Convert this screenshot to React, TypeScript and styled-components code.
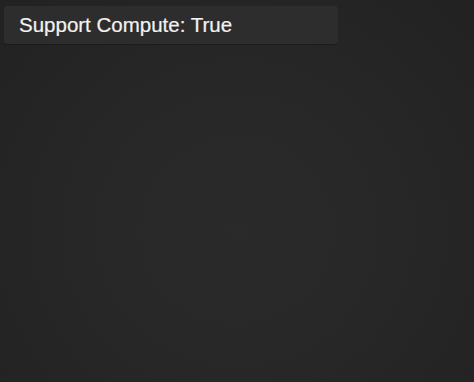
import React from 'react'
import styled, { createGlobalStyle } from 'styled-components'

const GlobalStyle = createGlobalStyle`
  html, body {
    margin: 0;
    padding: 0;
    height: 100%;
  }
  body {
    font-family: "Liberation Sans", Arial, sans-serif;
    background: #232323;
  }
  #root {
    height: 100%;
  }
`

const Page = styled.div`
  box-sizing: border-box;
  height: 100%;
  padding: 6px 4px;
  background: radial-gradient(ellipse at 50% 60%, #2a2a2a 0%, #272727 45%, #222222 100%);
`

const StatusBar = styled.div`
  box-sizing: border-box;
  width: 334px;
  height: 38px;
  padding: 0 15px;
  display: flex;
  align-items: center;
  background: #2d2d2d;
  border-radius: 3px;
  box-shadow: 0 1px 1px rgba(0, 0, 0, 0.25);
  color: #f2f2f2;
  font-size: 20.5px;
  -webkit-text-stroke: 0.2px #f2f2f2;
`

export default function App() {
  return (
    <>
      <GlobalStyle />
      <Page>
        <StatusBar>Support Compute: True</StatusBar>
      </Page>
    </>
  )
}
